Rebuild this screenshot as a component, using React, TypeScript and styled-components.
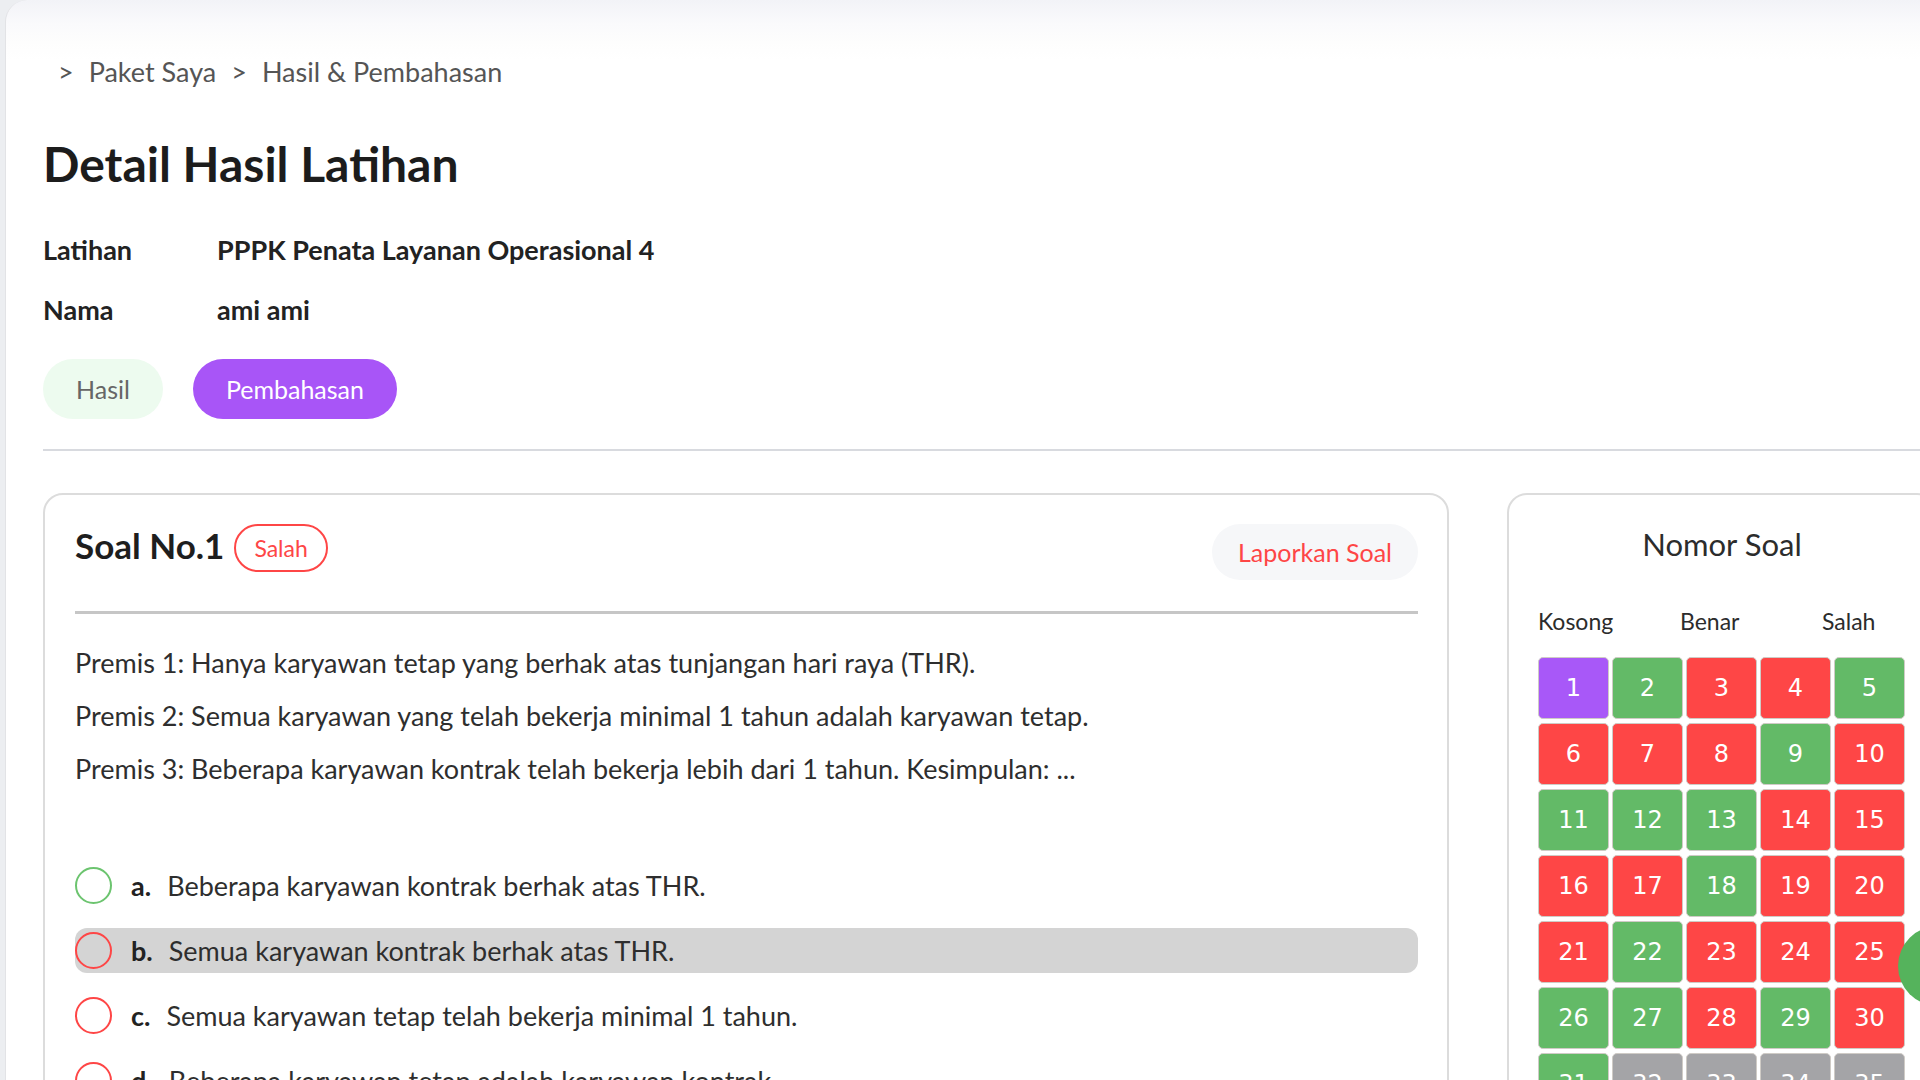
import styled, { createGlobalStyle } from 'styled-components';

type Status = 'kosong' | 'benar' | 'salah' | 'active';

const statusColors: Record<Status, string> = {
  active: '#a858f8',
  benar: '#63ba67',
  salah: '#fe4646',
  kosong: '#a4a4a7',
};

const GlobalStyle = createGlobalStyle`
  html, body {
    margin: 0;
    padding: 0;
    background: #eceef1;
    overflow: hidden;
  }

  body {
    font-family: Lato, "Open Sans", sans-serif;
    color: #2b2b2b;
  }

  * {
    box-sizing: border-box;
  }
`;

const Page = styled.div`
  min-height: 100vh;
  padding-left: 5px;
`;

const Main = styled.main`
  min-height: 100vh;
  width: 1980px;
  padding: 56px 0 0 37px;
  background: linear-gradient(#f2f3f7 0, #fafafc 24px, #fdfdfd 42px, #fff 60px);
  border-top-left-radius: 22px;
  border-left: 1px solid #e2e3e6;
`;

const Breadcrumb = styled.nav`
  display: flex;
  align-items: center;
  gap: 15px;
  height: 30px;
  padding-left: 15px;
  font-size: 27px;
  color: #555;
`;

const Crumb = styled.span``;

const Title = styled.h1`
  margin: 50px 0 0;
  font-size: 48px;
  line-height: 56px;
  font-weight: 700;
  color: #1c1c1c;
`;

const InfoTable = styled.div`
  display: grid;
  grid-template-columns: 174px auto;
  row-gap: 30px;
  margin-top: 43px;
  font-size: 27px;
  line-height: 30px;
  font-weight: 700;
  color: #222;
`;

const Tabs = styled.div`
  display: flex;
  gap: 30px;
  margin-top: 34px;
`;

const TabButton = styled.button<{ $active?: boolean }>`
  height: 60px;
  padding: 0 33px;
  border: none;
  border-radius: 30px;
  font-family: inherit;
  font-size: 25px;
  background: ${({ $active }) => ($active ? '#a855f7' : '#edfbef')};
  color: ${({ $active }) => ($active ? '#fff' : '#666')};
`;

const Divider = styled.hr`
  margin: 30px 0 0;
  border: none;
  height: 2px;
  background: #d8dadf;
`;

const Content = styled.div`
  display: flex;
  align-items: flex-start;
  gap: 58px;
  margin-top: 42px;
`;

const QuestionCard = styled.section`
  width: 1406px;
  min-height: 700px;
  padding: 29px 29px 40px 30px;
  border: 2px solid #dcdcdc;
  border-radius: 20px;
  background: #fff;
`;

const CardHeader = styled.header`
  display: flex;
  justify-content: space-between;
  align-items: flex-start;
`;

const HeadingGroup = styled.div`
  display: flex;
  align-items: center;
  gap: 10px;
  height: 48px;
`;

const QuestionNo = styled.h2`
  margin: 0 0 6px;
  font-size: 35px;
  font-weight: 700;
  color: #1e1e1e;
`;

const ResultBadge = styled.span`
  display: inline-flex;
  align-items: center;
  height: 48px;
  padding: 0 18px;
  border: 2px solid #fe4646;
  border-radius: 24px;
  font-size: 23px;
  color: #fe4646;
`;

const ReportButton = styled.button`
  height: 56px;
  padding: 0 26px;
  border: none;
  border-radius: 28px;
  background: #f6f7f9;
  font-family: inherit;
  font-size: 25px;
  color: #fe4646;
`;

const CardDivider = styled.hr`
  margin: 31px 0 0;
  border: none;
  height: 3px;
  background: #c6c6c6;
`;

const Premises = styled.div`
  display: flex;
  flex-direction: column;
  gap: 23px;
  margin-top: 34px;
`;

const Premise = styled.p`
  margin: 0;
  font-size: 27px;
  line-height: 30px;
  color: #2e2e2e;
`;

const Options = styled.ol`
  display: flex;
  flex-direction: column;
  gap: 20px;
  margin: 79px 0 0;
  padding: 0;
  list-style: none;
`;

const Option = styled.li<{ $picked?: boolean }>`
  display: flex;
  align-items: center;
  height: 45px;
  border-radius: 12px;
  background: ${({ $picked }) => ($picked ? '#d4d4d4' : 'transparent')};
  font-size: 27px;
  color: #2e2e2e;
`;

const Radio = styled.span<{ $tone: 'benar' | 'salah' }>`
  flex: none;
  width: 37px;
  height: 37px;
  border-radius: 50%;
  border: 2px solid ${({ $tone }) => ($tone === 'benar' ? '#6cc46f' : '#fe4646')};
`;

const OptionKey = styled.b`
  margin: 0 16px 0 19px;
  font-size: 27px;
  color: #222;
`;

const Sidebar = styled.aside`
  width: 430px;
  min-height: 700px;
  padding: 31px 0 0 29px;
  border: 2px solid #dcdcdc;
  border-radius: 20px;
  background: #fff;
`;

const SidebarTitle = styled.h3`
  margin: 0 0 0 -29px;
  font-size: 31px;
  line-height: 36px;
  font-weight: 400;
  text-align: center;
  color: #2c2c2c;
`;

const Legend = styled.div`
  display: grid;
  grid-template-columns: repeat(3, 142px);
  margin-top: 44px;
  font-size: 23px;
  line-height: 30px;
  color: #2c2c2c;
`;

const NumberGrid = styled.div`
  display: grid;
  grid-template-columns: repeat(5, 71px);
  grid-auto-rows: 62px;
  column-gap: 3px;
  row-gap: 4px;
  margin-top: 21px;
`;

const NumberCell = styled.button<{ $status: Status }>`
  display: flex;
  align-items: center;
  justify-content: center;
  padding: 0;
  border: 1px solid #cfcbc6;
  border-radius: 5px;
  background: ${({ $status }) => statusColors[$status]};
  font-family: "DejaVu Sans", Verdana, sans-serif;
  font-size: 24px;
  color: #fff;
`;

const ChatFab = styled.button`
  position: fixed;
  left: 1898px;
  top: 926px;
  width: 80px;
  height: 80px;
  border: none;
  border-radius: 50%;
  background: #55b35c;
`;

const premises = [
  'Premis 1: Hanya karyawan tetap yang berhak atas tunjangan hari raya (THR).',
  'Premis 2: Semua karyawan yang telah bekerja minimal 1 tahun adalah karyawan tetap.',
  'Premis 3: Beberapa karyawan kontrak telah bekerja lebih dari 1 tahun. Kesimpulan: ...',
];

const options: { key: string; text: string; tone: 'benar' | 'salah'; picked?: boolean }[] = [
  { key: 'a.', text: 'Beberapa karyawan kontrak berhak atas THR.', tone: 'benar' },
  { key: 'b.', text: 'Semua karyawan kontrak berhak atas THR.', tone: 'salah', picked: true },
  { key: 'c.', text: 'Semua karyawan tetap telah bekerja minimal 1 tahun.', tone: 'salah' },
  { key: 'd.', text: 'Beberapa karyawan tetap adalah karyawan kontrak.', tone: 'salah' },
];

// B = benar, S = salah, K = kosong, A = soal yang sedang dibuka
const answerMap = 'ABSSB' + 'SSSBS' + 'BBBSS' + 'SSBSS' + 'SBSSS' + 'BBSBS' + 'BKKKK';

const toStatus = (c: string): Status =>
  c === 'A' ? 'active' : c === 'B' ? 'benar' : c === 'S' ? 'salah' : 'kosong';

export default function App() {
  return (
    <>
      <GlobalStyle />
      <Page>
        <Main>
          <Breadcrumb>
            <Crumb>&gt;</Crumb>
            <Crumb>Paket Saya</Crumb>
            <Crumb>&gt;</Crumb>
            <Crumb>Hasil &amp; Pembahasan</Crumb>
          </Breadcrumb>

          <Title>Detail Hasil Latihan</Title>

          <InfoTable>
            <span>Latihan</span>
            <span>PPPK Penata Layanan Operasional 4</span>
            <span>Nama</span>
            <span>ami ami</span>
          </InfoTable>

          <Tabs>
            <TabButton>Hasil</TabButton>
            <TabButton $active>Pembahasan</TabButton>
          </Tabs>

          <Divider />

          <Content>
            <QuestionCard>
              <CardHeader>
                <HeadingGroup>
                  <QuestionNo>Soal No.1</QuestionNo>
                  <ResultBadge>Salah</ResultBadge>
                </HeadingGroup>
                <ReportButton>Laporkan Soal</ReportButton>
              </CardHeader>

              <CardDivider />

              <Premises>
                {premises.map((p) => (
                  <Premise key={p}>{p}</Premise>
                ))}
              </Premises>

              <Options>
                {options.map((o) => (
                  <Option key={o.key} $picked={o.picked}>
                    <Radio $tone={o.tone} />
                    <OptionKey>{o.key}</OptionKey>
                    {o.text}
                  </Option>
                ))}
              </Options>
            </QuestionCard>

            <Sidebar>
              <SidebarTitle>Nomor Soal</SidebarTitle>
              <Legend>
                <span>Kosong</span>
                <span>Benar</span>
                <span>Salah</span>
              </Legend>
              <NumberGrid>
                {answerMap.split('').map((c, i) => (
                  <NumberCell key={i} $status={toStatus(c)}>
                    {i + 1}
                  </NumberCell>
                ))}
              </NumberGrid>
            </Sidebar>
          </Content>
        </Main>
        <ChatFab aria-label="Chat" />
      </Page>
    </>
  );
}
